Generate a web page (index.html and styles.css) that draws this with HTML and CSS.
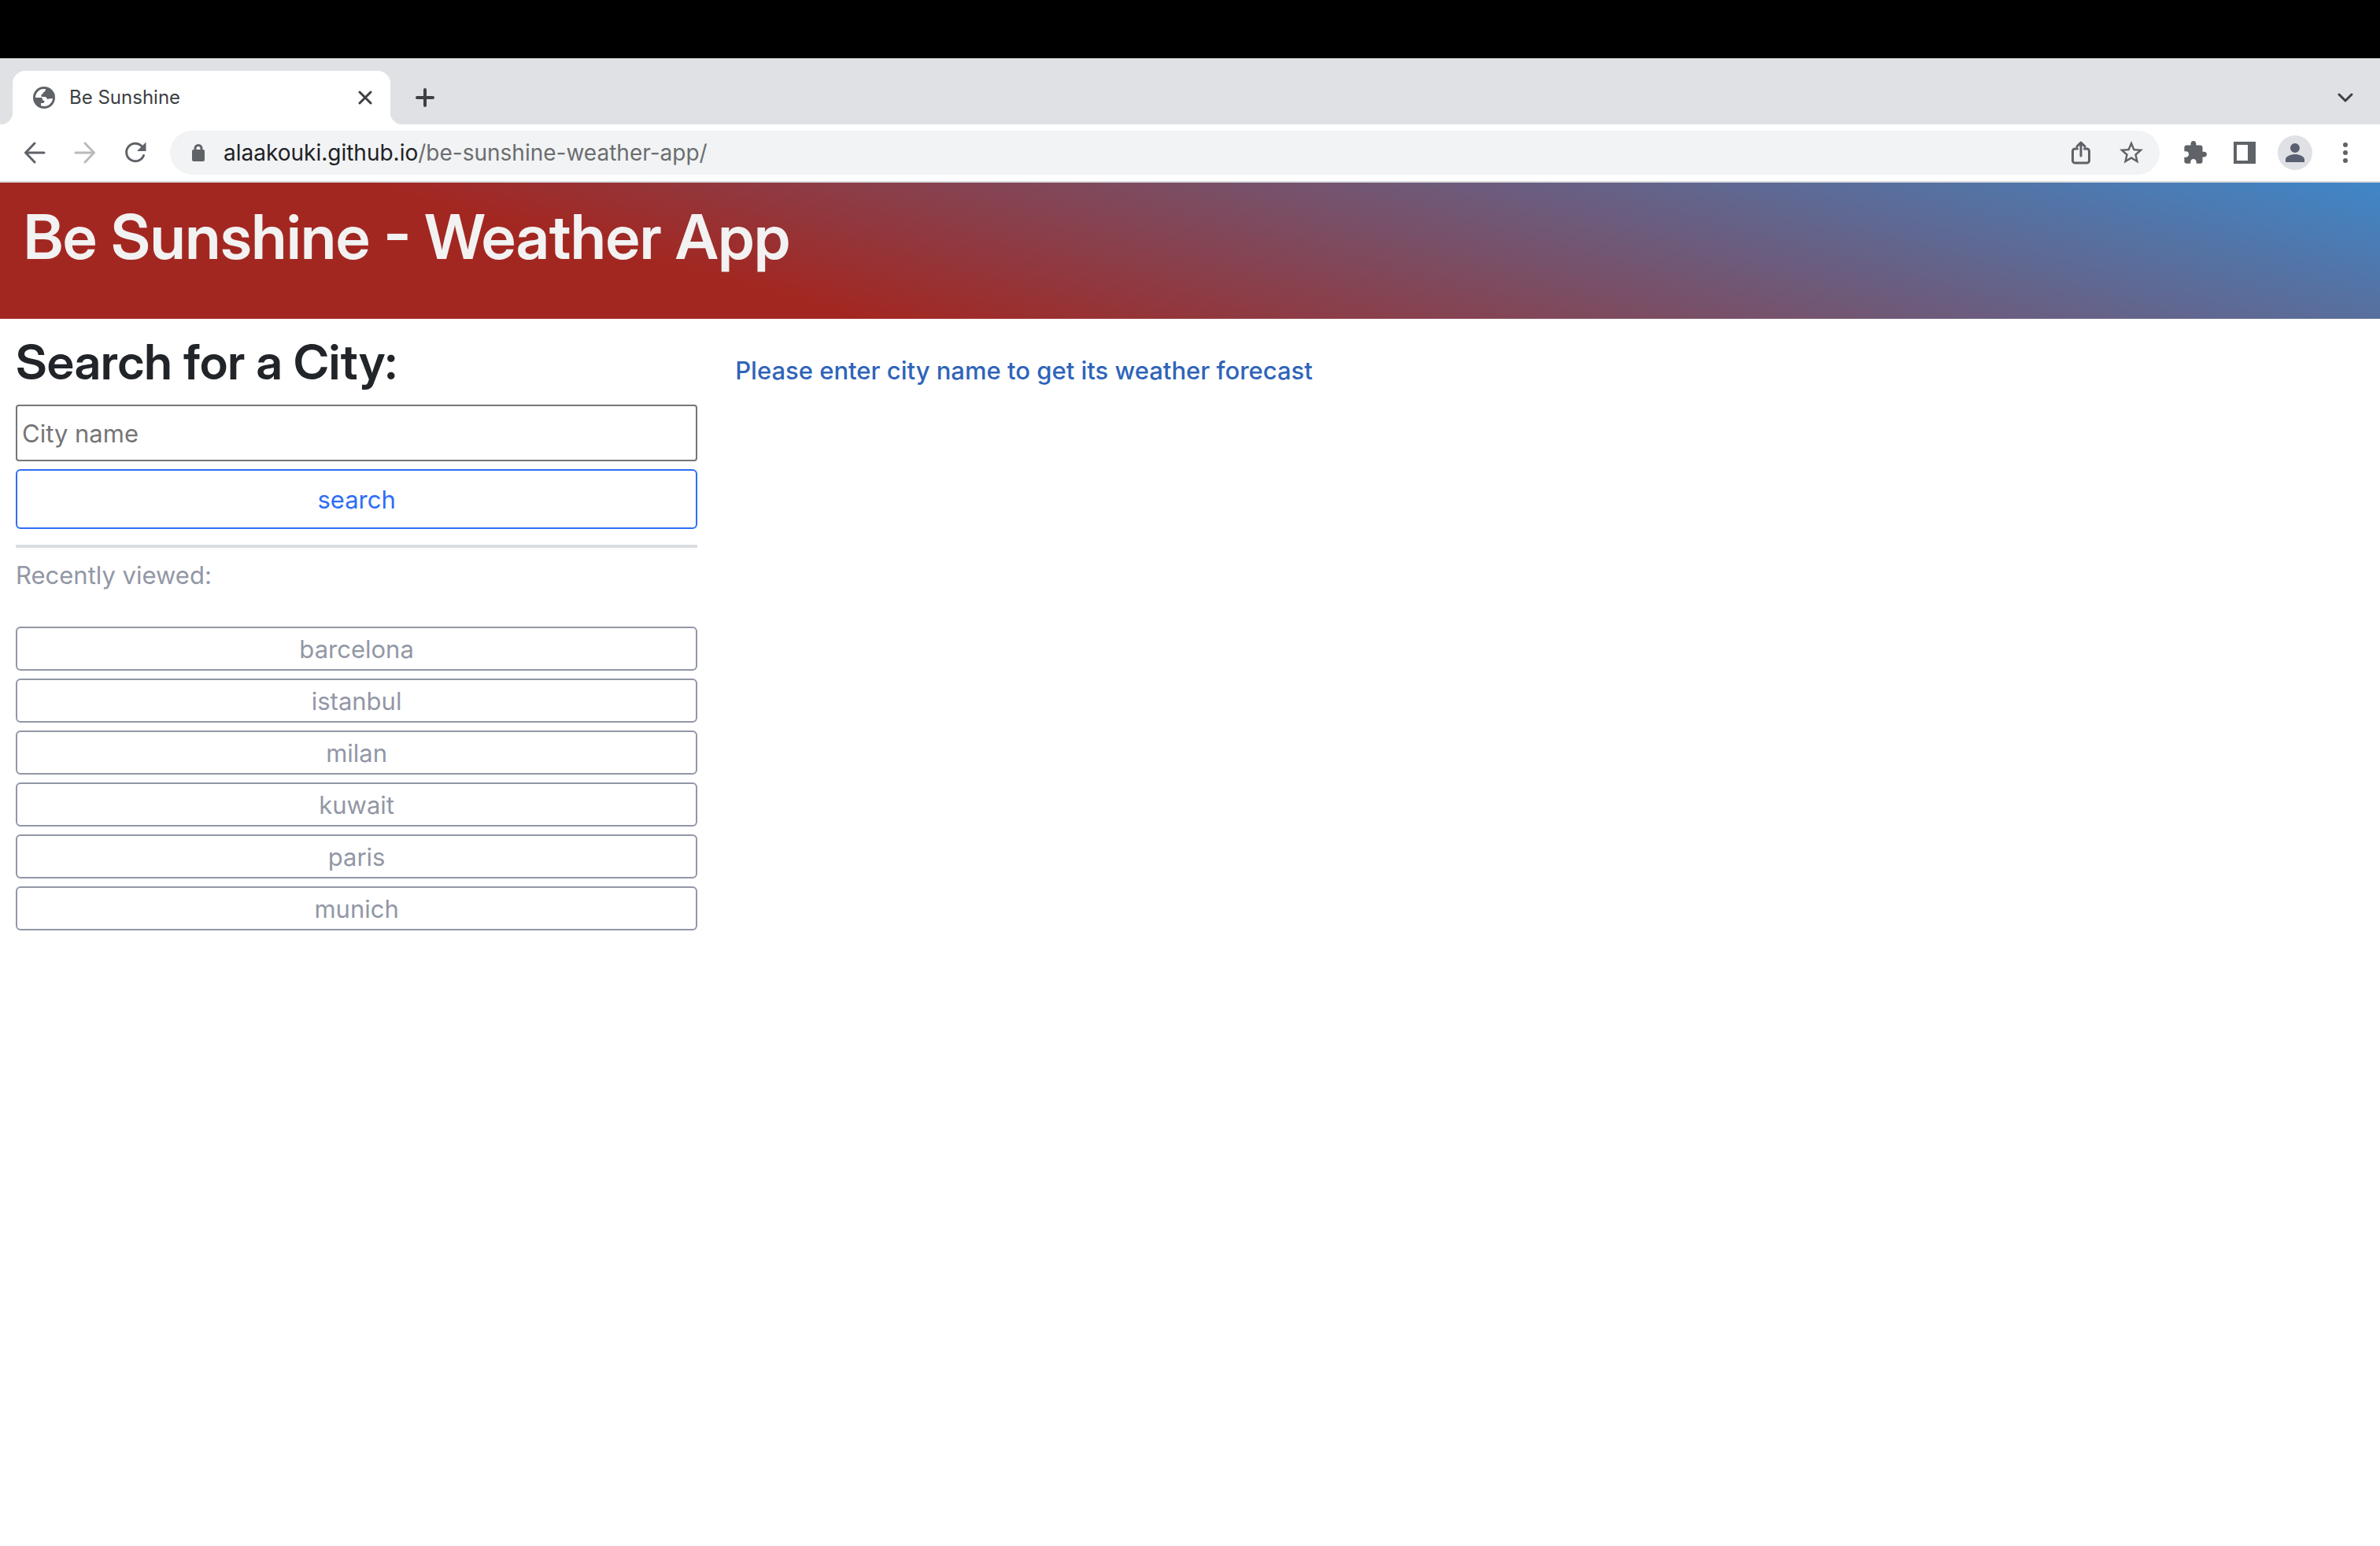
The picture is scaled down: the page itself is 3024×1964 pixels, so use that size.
FILE: index.html
```html
<!DOCTYPE html>
<html lang="en">
<head>
<meta charset="utf-8">
<title>Be Sunshine</title>
<link rel="stylesheet" href="styles.css">
</head>
<body>
<div class="screen-top"></div>
<div class="tab-strip">
  <div class="tab">
    <svg class="tab-globe" viewBox="0 0 28 28" aria-hidden="true"><circle cx="14" cy="14" r="14" fill="#5f6368"/><path d="M3 14A11 11 0 0 1 16 3.200Q16 6.500 13 7Q13.500 9.500 10.500 10V13H15Q17 13 17.500 15Q18.500 16.500 20 15.500L25 15A11 11 0 0 1 10 24.300V21H13Q14.500 20.500 14.500 18Q11.500 18 11.500 14Z" fill="#fff"/></svg>
    <span class="tab-title">Be Sunshine</span>
    <button class="icon-button tab-close" aria-label="Close tab"><svg width="18" height="18" viewBox="0 0 18 18"><path d="M2 2L16 16M16 2L2 16" class="line dark"/></svg></button>
  </div>
  <button class="icon-button new-tab" aria-label="New tab"><svg width="24" height="24" viewBox="0 0 24 24"><path d="M12 2V22M2 12H22" class="line dark thick"/></svg></button>
  <button class="icon-button tab-search" aria-label="Search tabs"><svg width="20" height="12" viewBox="0 0 20 12"><path d="M2 2L10 10L18 2" class="line dark"/></svg></button>
</div>
<div class="toolbar">
  <nav class="history">
    <button class="icon-button" aria-label="Back"><svg width="28" height="28" viewBox="0 0 28 28"><path d="M26 14H3M14 2L2.500 14L14 26" class="line"/></svg></button>
    <button class="icon-button" aria-label="Forward"><svg width="28" height="28" viewBox="0 0 28 28"><path d="M2 14H25M14 2L25.500 14L14 26" class="line faded"/></svg></button>
    <button class="icon-button" aria-label="Reload"><svg width="28" height="28" viewBox="0 0 28 28"><path d="M24.500 17.500A11.300 11.300 0 1 1 22 5.500" class="line"/><path d="M27.500 .5V12H16Z" class="fill"/></svg></button>
  </nav>
  <div class="address-bar">
    <svg class="lock" width="16" height="22" viewBox="0 0 16 22" aria-hidden="true"><path d="M4 9V5.500a4 4 0 0 1 8 0V9" class="line thin"/><rect y="7" width="16" height="15" rx="2" class="fill"/></svg>
    <a class="url" href="#">alaakouki.github.io<span class="url-path">/be-sunshine-weather-app/</span></a>
    <button class="icon-button" aria-label="Share"><svg width="24" height="30" viewBox="0 0 24 30"><path d="M7.500 10H4.500a3 3 0 0 0-3 3v12a3 3 0 0 0 3 3h15a3 3 0 0 0 3-3V13a3 3 0 0 0-3-3H16.500M12 19V2.500M7 7L12 2L17 7" class="line thin"/></svg></button>
    <button class="icon-button" aria-label="Bookmark"><svg width="30" height="30" viewBox="2 2 20 20"><path d="M22 9.240l-7.190-.620L12 2 9.190 8.630 2 9.240l5.460 4.730L5.820 21 12 17.270 18.180 21l-1.630-7.030L22 9.240zM12 15.400l-3.760 2.270 1-4.280-3.320-2.880 4.380-.380L12 6.100l1.710 4.040 4.380.380-3.320 2.880 1 4.280L12 15.400z" class="fill"/></svg></button>
  </div>
  <div class="actions">
    <button class="icon-button" aria-label="Extensions"><svg width="30" height="30" viewBox="1 1 22 22"><path d="M20.500 11H19V7c0-1.100-.9-2-2-2h-4V3.500C13 2.120 11.880 1 10.500 1S8 2.120 8 3.500V5H4c-1.100 0-1.990.9-1.990 2v3.800H3.500c1.490 0 2.700 1.210 2.700 2.700s-1.210 2.700-2.700 2.700H2V20c0 1.100.9 2 2 2h3.800v-1.500c0-1.490 1.210-2.700 2.700-2.700 1.490 0 2.700 1.210 2.700 2.700V22H17c1.100 0 2-.9 2-2v-4h1.500c1.380 0 2.500-1.120 2.500-2.500S21.880 11 20.500 11z" class="fill"/></svg></button>
    <button class="icon-button" aria-label="Side panel"><svg width="28" height="28" viewBox="0 0 28 28"><path d="M0 0H28V28H0ZM4 4V24H18V4Z" class="fill" fill-rule="evenodd"/></svg></button>
    <button class="icon-button avatar" aria-label="Profile"><svg width="24" height="24" viewBox="0 0 24 24"><path d="M12 12a6 6 0 1 0 0-12 6 6 0 0 0 0 12ZM0 24V20.500C0 16.500 7 14 12 14S24 16.500 24 20.500V24Z" fill="#5a6072"/></svg></button>
    <button class="icon-button" aria-label="Menu"><svg width="6" height="26" viewBox="0 0 6 26"><circle cx="3" cy="3" r="3" class="fill"/><circle cx="3" cy="13" r="3" class="fill"/><circle cx="3" cy="23" r="3" class="fill"/></svg></button>
  </div>
</div>
<header class="hero"><h1>Be Sunshine - Weather App</h1></header>
<main class="content">
  <aside class="sidebar">
    <form>
      <h2><label for="city">Search for a City:</label></h2>
      <input id="city" type="text" placeholder="City name">
      <button class="search" type="button">search</button>
    </form>
    <hr>
    <p class="recent-title">Recently viewed:</p>
    <div class="recent">
      <button>barcelona</button>
      <button>istanbul</button>
      <button>milan</button>
      <button>kuwait</button>
      <button>paris</button>
      <button>munich</button>
    </div>
  </aside>
  <section class="forecast"><p>Please enter city name to get its weather forecast</p></section>
</main>
</body>
</html>
```

FILE: styles.css
```css
* { box-sizing: border-box; }
body {
  margin: 0;
  background: #fff;
  color: #212529;
  font: 31px/48px Inter, "Liberation Sans", sans-serif;
}
h1, h2, p { margin: 0; }
button, input { font: inherit; }
svg { display: block; }

.line { fill: none; stroke: #5f6368; stroke-width: 3; stroke-linecap: round; stroke-linejoin: round; }
.dark { stroke: #3c4043; }
.thick { stroke-width: 4; }
.thin { stroke-width: 3; }
.faded { stroke: #bababc; }
.fill { fill: #5f6368; }
.icon-button { display: flex; padding: 0; border: 0; background: none; }

.screen-top { height: 74px; background: #000; }

.tab-strip {
  display: flex;
  align-items: center;
  height: 84px;
  padding: 16px 34px 0 16px;
  background: #dfe1e5;
}
.tab {
  position: relative;
  display: flex;
  align-items: center;
  width: 480px;
  height: 68px;
  padding: 0 23px 0 26px;
  border-radius: 16px 16px 0 0;
  background: #fff;
}
.tab::before, .tab::after {
  content: "";
  position: absolute;
  bottom: 0;
  width: 16px;
  height: 16px;
}
.tab::before { left: -16px; background: radial-gradient(circle at 0 0, #dfe1e5 16px, #fff 17px); }
.tab::after { right: -16px; background: radial-gradient(circle at 100% 0, #dfe1e5 16px, #fff 17px); }
.tab-globe { width: 28px; height: 28px; }
.tab-title { margin-left: 18px; color: #3c4043; font-size: 24px; }
.tab-close { margin-left: auto; }
.new-tab { margin-left: 32px; }
.tab-search { margin-left: auto; }

.toolbar {
  display: flex;
  align-items: center;
  height: 74px;
  padding: 0 41px 0 30px;
  border-bottom: 2px solid #d9dadd;
}
.history { display: flex; gap: 36px; margin-right: 30px; }
.address-bar {
  display: flex;
  flex: 1;
  align-items: center;
  height: 56px;
  padding: 0 21px 0 28px;
  border-radius: 28px;
  background: #f1f3f4;
}
.address-bar button + button { margin-left: 37px; }
.url {
  flex: 1;
  margin-left: 24px;
  color: #202124;
  font-size: 28px;
  text-decoration: none;
}
.url-path { color: #6b6d70; }
.actions { display: flex; align-items: center; gap: 34px; margin-left: 30px; }
.avatar {
  align-items: center;
  justify-content: center;
  width: 44px;
  height: 44px;
  margin: 0 5px 0 -6px;
  border-radius: 50%;
  background: #dfe1e5;
}

.hero {
  padding: 21px 30px 56px;
  background: linear-gradient(15deg, #a32721 30%, #3f87c8 100%);
  color: #f2f2f2;
}
h1, h2 {
  font-family: "Inter Display", Inter, "Liberation Sans", sans-serif;
  font-weight: 600;
}
.hero h1 { font-size: 78px; line-height: 96px; }

.content { display: flex; }
.sidebar { width: 30%; padding: 16px 21px 16px 20px; }
.sidebar h2 { margin-bottom: 16px; font-size: 62px; line-height: 77px; }
.sidebar input {
  display: block;
  width: 100%;
  height: 72px;
  padding: 2px 6px;
  border: 2px solid #767676;
  border-radius: 4px;
}
.sidebar input::placeholder { color: #757575; opacity: 1; }
.search {
  width: 100%;
  height: 76px;
  margin-top: 10px;
  padding: 2px 0 0;
  border: 2px solid #2f6df6;
  border-radius: 6px;
  background: #fff;
  color: #2f6df6;
}
hr { height: 4px; margin: 20px 0 11px; border: 0; background: #dadde0; }
.recent-title { color: #9297a6; }
.recent { display: grid; gap: 10px; margin-top: 41px; }
.recent button {
  height: 56px;
  padding: 2px 0 0;
  border: 2px solid #9297a6;
  border-radius: 6px;
  background: #fff;
  color: #9297a6;
}
.forecast { padding: 42px 27px; color: #2f64b9; font-weight: 500; }
```
